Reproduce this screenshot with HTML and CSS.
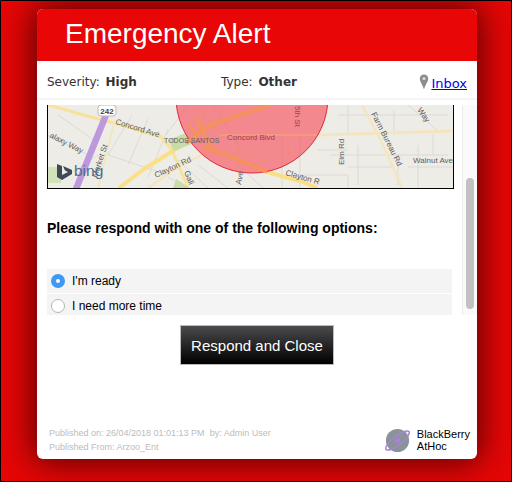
FILE: index.html
```html
<!DOCTYPE html>
<html lang="en">
<head>
  <meta charset="UTF-8" />
  <title>Emergency Alert</title>
  <link rel="stylesheet" href="styles.css">
</head>
<body>
  <div class="card">
    <div class="card-header">Emergency Alert</div>

    <div class="info-row">
      <div class="info-severity">Severity: <b>High</b></div>
      <div class="info-type">Type: <b>Other</b></div>
      <svg class="pin" viewBox="0 0 10 16" width="10" height="16">
        <path d="M5 0.5C2.4 0.5 0.8 2.4 0.8 4.7C0.8 7.6 3.6 10.4 5 15.5C6.4 10.4 9.2 7.6 9.2 4.7C9.2 2.4 7.6 0.5 5 0.5Z" fill="#8c8c8c"/>
        <circle cx="5" cy="4.6" r="1.6" fill="#d8d8d8"/>
      </svg>
      <a class="inbox" href="#">Inbox</a>
    </div>

    <div class="scroll-area">
      <div class="scroll-content">
        <div class="map">
          <svg viewBox="0 0 405 83" width="405" height="83">
            <rect width="405" height="83" fill="#eeece6"/>
            <!-- side streets -->
            <g fill="none" stroke="#dcdad3" stroke-width="1">
              <path d="M0 30L40 50M10 10L50 38M84 10L60 50M100 14L80 60M120 24L100 72M140 0L118 30M165 0L190 40M60 50L120 70M20 70L50 50"/>
              <path d="M234 30V83M252 30V83M270 45H300M282 50H400M290 10H400M300 0V30M346 5V30M360 0L390 26M300 62H345M360 62H405M310 40V80M370 40V83M250 70H300V83M350 50V80M385 30V50"/>
              <path d="M130 55L160 83M150 60L180 83M190 60L215 83M120 72L140 83"/>
            </g>
            <!-- roads -->
            <g fill="none" stroke-linejoin="round">
              <path d="M0 0L43 12L66 18L113 32L124 45L140 83" stroke="#f7e29a" stroke-width="3"/>
              <path d="M71 83L96 64L136 39L162 20L222 0" stroke="#fadf85" stroke-width="4"/>
              <path d="M155 42L179 50L219 67L255 77L269 83" stroke="#fadf85" stroke-width="4"/>
              <path d="M172 30L272 30L405 26" stroke="#f3e6bf" stroke-width="3"/>
              <path d="M314 0L335 40L354 83" stroke="#f3e6bf" stroke-width="2.5"/>
              <path d="M100 83L130 62L165 44" stroke="#f3e6bf" stroke-width="2.5"/>
              <path d="M66 18L50 83" stroke="#f3e6bf" stroke-width="2"/>
              <path d="M58 10L28 84" stroke="#bd98dc" stroke-width="6.5"/>
            </g>
            <path d="M128 74L142 83H125Z" fill="#c9dca8"/>
            <path d="M0 62H13V78H0Z" fill="#d3e0bc"/>
            <path d="M120 35L138 28L146 38L126 46Z" fill="#c9dca8"/>
            <!-- alert radius -->
            <circle cx="204" cy="-8" r="76" fill="#f45a64" fill-opacity=".68" stroke="#e0283a" stroke-width="1"/>
            <g fill="none" stroke="#f08a78" stroke-width="1">
              <path d="M138 8L170 40M146 0L178 34M160 0L152 20M175 5L165 30M185 50L215 40M195 55L225 45M205 60L232 50M190 35V60M240 30V50"/>
            </g>
            <g fill="none" stroke="#f6925c" stroke-width="3.5" stroke-linejoin="round">
              <path d="M138 38L162 20L222 0"/>
              <path d="M155 42L179 50L219 67"/>
              <path d="M148 12L157 30L165 44"/>
              <path d="M148 28L140 20"/>
            </g>
            <path d="M172 30H269" fill="none" stroke="#f59a80" stroke-width="2"/>
            <!-- route shield -->
            <rect x="50" y="0" width="18" height="11" rx="3" fill="#fff" stroke="#bbb"/>
            <text class="map-shield" x="59" y="9" text-anchor="middle">242</text>
            <!-- labels -->
            <text class="map-label" transform="translate(67 19) rotate(17)">Concord Ave</text>
            <text class="map-label map-small" x="116" y="38">TODOS SANTOS</text>
            <text class="map-label map-red" x="179" y="35">Concord Blvd</text>
            <text class="map-label" transform="translate(1 32) rotate(27)">alaxy Way</text>
            <text class="map-label" transform="translate(49 73) rotate(-72)">Market St</text>
            <text class="map-label" transform="translate(108 73) rotate(-25)">Clayton Rd</text>
            <text class="map-label" transform="translate(237 70) rotate(16)">Clayton R</text>
            <text class="map-label" transform="translate(136 67) rotate(68)">Gali</text>
            <text class="map-label" transform="translate(193 80) rotate(-80)">Ave</text>
            <text class="map-label map-red" transform="translate(247 1) rotate(90)">5th St</text>
            <text class="map-label" transform="translate(296 60) rotate(-90)">Elm Rd</text>
            <text class="map-label" transform="translate(323 9) rotate(63)">Farm Bureau Rd</text>
            <text class="map-label" x="365" y="58">Walnut Ave</text>
            <text class="map-label" transform="translate(369 5) rotate(55)">Way</text>
            <!-- bing -->
            <path d="M9 59L14 61V70L20 67L17 65.5L15 61L24 65V69L14 75L9 72Z" fill="#3d4a57"/>
            <text class="map-bing" x="26" y="71">bing</text>
          </svg>
        </div>

        <div class="question">Please respond with one of the following options:</div>

        <div class="options">
          <label class="option">
            <span class="radio radio-on"></span>
            <span>I'm ready</span>
          </label>
          <label class="option">
            <span class="radio"></span>
            <span>I need more time</span>
          </label>
        </div>
      </div>
      <div class="scrollbar"><div class="scroll-thumb"></div></div>
    </div>

    <button class="respond-btn">Respond and Close</button>

    <div class="card-footer">
      <div class="published">
        <div><span class="published-on">Published on: 26/04/2018 01:01:13 PM</span>by: Admin User</div>
        <div>Published From: Arzoo_Ent</div>
      </div>
      <div class="brand">
        <svg viewBox="0 0 30 28" width="29" height="27">
          <circle cx="15" cy="14" r="12" fill="#88939a"/>
          <ellipse cx="15" cy="14" rx="15" ry="4.6" transform="rotate(-38 15 14)" fill="none" stroke="#ab82d2" stroke-width="1.6"/>
          <circle cx="15" cy="14" r="2.6" fill="#ab82d2"/>
        </svg>
        <div class="brand-name">BlackBerry<br>AtHoc</div>
      </div>
    </div>
  </div>
</body>
</html>
```

FILE: styles.css
```css
html, body {
  height: 100%;
}

body {
  margin: 0;
  box-sizing: border-box;
  border: 1px solid #000;
  background: #e60606;
  overflow: hidden;
  font-family: "Liberation Sans", Arial, sans-serif;
}

.card {
  width: 440px;
  height: 450px;
  margin: 8px 0 0 36px;
  display: flex;
  flex-direction: column;
  background: #fff;
  border-radius: 6px;
  overflow: hidden;
  box-shadow: 0 0 34px 3px rgba(0,0,0,0.65);
}

.card-header {
  height: 52px;
  flex-shrink: 0;
  padding-left: 28px;
  background: #e80606;
  color: #fff;
  font-size: 28px;
  line-height: 50px;
}

.info-row {
  height: 39px;
  box-sizing: border-box;
  flex-shrink: 0;
  margin-bottom: 5px;
  padding: 4px 10px 0;
  display: flex;
  align-items: center;
  border-bottom: 2px solid #f5f5f5;
  font-family: "DejaVu Sans", Verdana, sans-serif;
  font-size: 12px;
  color: #333;
}

.info-severity {
  width: 174px;
}

.info-severity b, .info-type b {
  margin-left: 2px;
}

.pin {
  margin-left: auto;
  margin-right: 2px;
}

.inbox {
  margin-top: 4px;
  color: #00e;
  font-size: 13px;
}

.scroll-area {
  height: 210px;
  flex-shrink: 0;
  display: flex;
  overflow: hidden;
}

.scroll-content {
  width: 425px;
  padding-left: 10px;
  box-sizing: border-box;
}

.map {
  width: 405px;
  height: 83px;
  border: 1px solid #000;
  border-top: none;
}

.map svg {
  display: block;
}

.map-label {
  font-family: "Liberation Sans", Arial, sans-serif;
  font-size: 8px;
  fill: #5d5d5d;
}

.map-small {
  font-size: 7px;
}

.map-red {
  fill: #a0404a;
}

.map-shield {
  font-family: "Liberation Sans", Arial, sans-serif;
  font-size: 8px;
  font-weight: bold;
  fill: #444;
}

.map-bing {
  font-family: "Liberation Sans", Arial, sans-serif;
  font-size: 15.5px;
  fill: #4f6d8a;
}

.question {
  margin: 31px 0 33px;
  font-size: 14px;
  line-height: 16px;
  font-weight: bold;
  color: #000;
}

.options {
  width: 405px;
  display: flex;
  flex-direction: column;
  gap: 1px;
}

.option {
  height: 24px;
  flex-shrink: 0;
  display: flex;
  align-items: center;
  gap: 7px;
  padding-left: 4px;
  background: #f4f4f4;
  font-size: 12px;
  color: #000;
}

.radio {
  width: 14px;
  height: 14px;
  box-sizing: border-box;
  border: 1px solid #b5b5b5;
  border-radius: 50%;
  background: #fff;
}

.radio-on {
  border: 5.5px solid #3f97f6;
}

.scrollbar {
  width: 15px;
  box-sizing: border-box;
  border-left: 1px solid #ededed;
  background: #fafafa;
  padding: 73px 3px 0 3px;
}

.scroll-thumb {
  height: 131px;
  background: #c1c1c1;
  border-radius: 4px;
}

.respond-btn {
  width: 154px;
  height: 40px;
  flex-shrink: 0;
  margin: 10px auto 0;
  padding: 0;
  border: 1px solid #bbb;
  background: linear-gradient(to bottom, #4b4b4e, #000);
  color: #fff;
  font-family: "Liberation Sans", Arial, sans-serif;
  font-size: 15px;
}

.card-footer {
  margin-top: auto;
  padding: 0 7px 5px 12px;
  display: flex;
  align-items: center;
  justify-content: space-between;
}

.published {
  font-size: 9px;
  line-height: 14px;
  color: #bcbcbc;
}

.published-on {
  margin-right: 5px;
}

.brand {
  display: flex;
  align-items: center;
  gap: 5px;
}

.brand-name {
  font-size: 11px;
  line-height: 12px;
  color: #000;
}
```
